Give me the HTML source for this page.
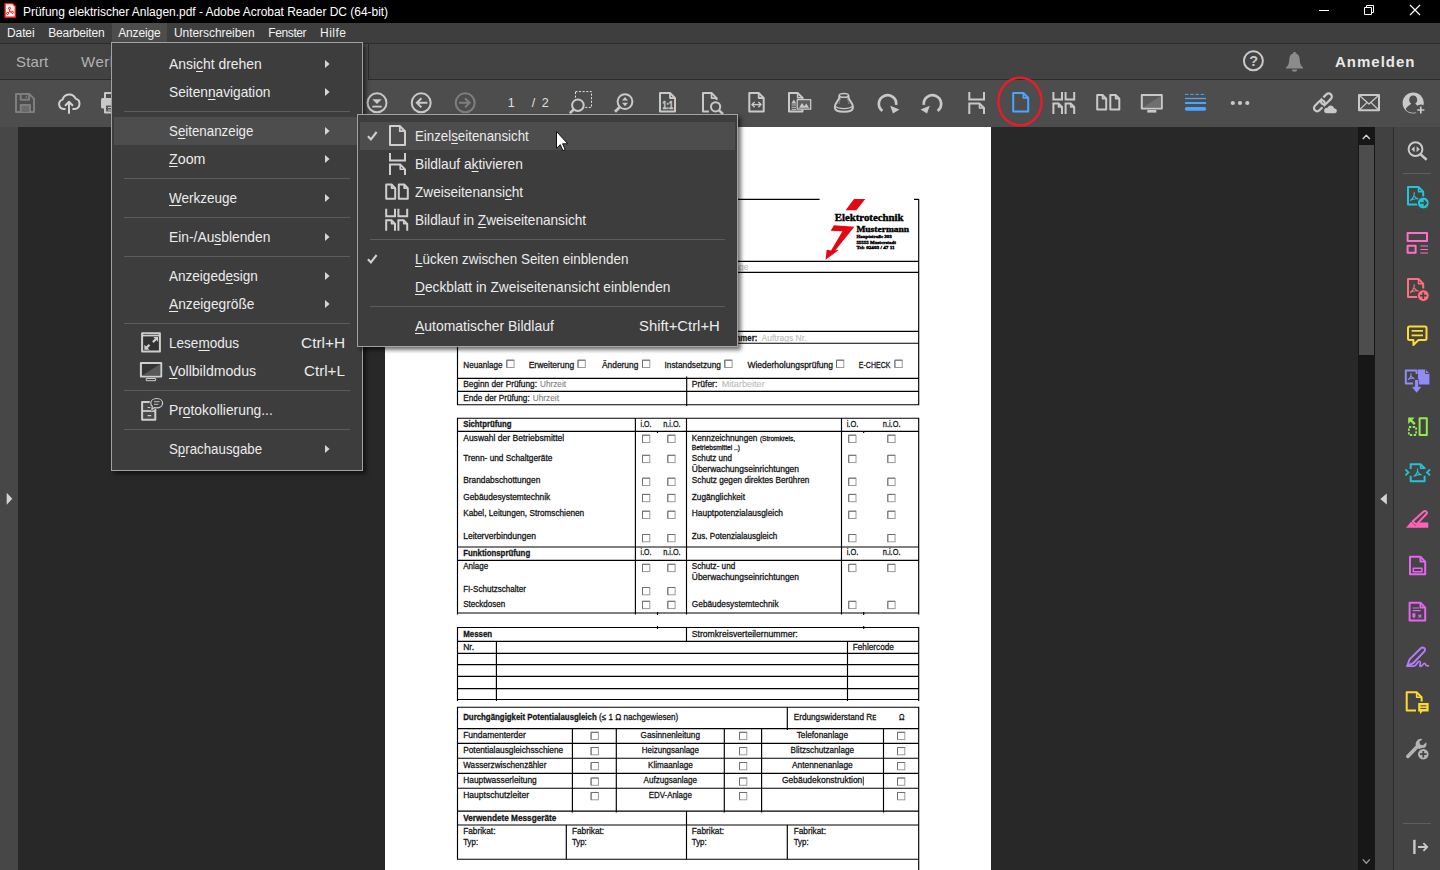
<!DOCTYPE html>
<html lang="de"><head><meta charset="utf-8"><title>Prüfung elektrischer Anlagen.pdf - Adobe Acrobat Reader DC (64-bit)</title>
<style>
html,body{margin:0;padding:0;}
body{width:1440px;height:870px;overflow:hidden;background:#282828;position:relative;font-family:"Liberation Sans",sans-serif;color:#e6e6e6;}
.abs{position:absolute;}
.t{position:absolute;white-space:pre;line-height:1;}
#titlebar{position:absolute;left:0;top:0;width:1440px;height:23px;background:#000;}
#menubar{position:absolute;left:0;top:23px;width:1440px;height:20px;background:#3e3e3e;}
#menubar .hl{position:absolute;left:112px;top:0;width:55px;height:20px;background:#4d4d4d;}
#tabbar{position:absolute;left:0;top:43px;width:1440px;height:36px;background:#434343;border-top:1px solid #2c2c2c;box-sizing:border-box;}
#tbline{position:absolute;left:0;top:79px;width:1440px;height:1px;background:#2c2c2c;}
#toolbar{position:absolute;left:0;top:80px;width:1440px;height:47px;background:#4d4d4d;}
#leftstrip{position:absolute;left:0;top:127px;width:18px;height:743px;background:#474747;}
#page{position:absolute;left:385px;top:127px;width:606px;height:743px;background:#fff;}
#vscroll{position:absolute;left:1358px;top:127px;width:17px;height:743px;background:#171717;}
#vthumb{position:absolute;left:1px;top:18px;width:15px;height:210px;background:#4d4d4d;}
#rstrip{position:absolute;left:1375px;top:127px;width:19px;height:743px;background:#414141;}
#rpane{position:absolute;left:1393px;top:127px;width:47px;height:743px;background:#444444;border-left:1px solid #2f2f2f;box-sizing:border-box;}
.menu{position:absolute;background:#3d3d3d;border:1px solid #a2a2a2;box-sizing:border-box;box-shadow:3px 3px 4px rgba(0,0,0,.55);}
.menu .row{position:absolute;height:28px;}
.menu .row.hl{background:#4d4d4d;}
.menu .sep{position:absolute;height:1px;background:#5c5c5c;}
.menu .lbl{position:absolute;white-space:pre;font-size:15px;line-height:28px;color:#ececec;top:0;display:inline-block;transform-origin:0 50%;}
.menu u{text-decoration:underline;text-underline-offset:1.5px;text-decoration-thickness:1px;}
svg{position:absolute;overflow:visible;}

</style></head>
<body>
<div id="titlebar">
<svg style="left:0;top:0" width="22" height="23" viewBox="0 0 22 23"><path d="M5 3.600H12.600L15.400 6.400V17.300H5Z" fill="#f6f6f6" stroke="#f41414" stroke-width="1.400"/><g stroke="#f41414" stroke-width="1" fill="none"><circle cx="9.500" cy="8.400" r="1"/><circle cx="7.500" cy="13.400" r="1"/><circle cx="12.400" cy="12.400" r="1"/><path d="M9.500 9.400L9.600 11.500L8.200 12.700M9.600 11.500L11.500 12.100"/></g></svg>
<span class="t" style="left:23px;top:6px;font-size:12px;color:#fff;letter-spacing:-0.027px">Prüfung elektrischer Anlagen.pdf - Adobe Acrobat Reader DC (64-bit)</span>
<svg style="left:1300px;top:-1px" width="140" height="23" viewBox="0 0 140 23"><path d="M19 11.5h10" stroke="#fff" stroke-width="1" fill="none"/><path d="M64.5 8.5h7v7h-7z M66.5 8.5v-2h7v7h-2" stroke="#fff" stroke-width="1" fill="none"/><path d="M110 6l10 10M120 6l-10 10" stroke="#fff" stroke-width="1.2" fill="none"/></svg>
</div>
<div id="menubar"><div class="hl"></div>
<span class="t" style="left:7px;top:4px;font-size:12px;color:#f2f2f2;letter-spacing:-0.104px">Datei</span>
<span class="t" style="left:48.3px;top:4px;font-size:12px;color:#f2f2f2;letter-spacing:-0.194px">Bearbeiten</span>
<span class="t" style="left:118.3px;top:4px;font-size:12px;color:#f2f2f2;letter-spacing:-0.179px">Anzeige</span>
<span class="t" style="left:174px;top:4px;font-size:12px;color:#f2f2f2;letter-spacing:-0.06px">Unterschreiben</span>
<span class="t" style="left:268.3px;top:4px;font-size:12px;color:#f2f2f2;letter-spacing:-0.398px">Fenster</span>
<span class="t" style="left:320px;top:4px;font-size:12px;color:#f2f2f2;letter-spacing:0.496px">Hilfe</span>
</div>
<div id="tabbar">
<span class="t" style="left:16px;top:10px;font-size:15px;color:#b2b2b2;letter-spacing:0.153px">Start</span>
<span class="t" style="left:81px;top:10px;font-size:15px;color:#b2b2b2;letter-spacing:0.538px">Werkzeuge</span>
<div class="abs" style="left:190px;top:0;width:179px;height:37px;background:#4d4d4d;border-right:1px solid #2c2c2c;border-left:1px solid #2c2c2c;box-sizing:border-box"></div>
<span class="t" style="left:1335px;top:10px;font-size:15px;font-weight:bold;color:#e9e9e9;letter-spacing:0.998px">Anmelden</span>
</div><div id="tbline" style="width:190px"></div><div id="tbline2" class="abs" style="left:368px;top:79px;width:1072px;height:1px;background:#2c2c2c"></div>
<div id="toolbar">
<span class="t" style="left:507.7px;top:17px;font-size:12.5px;color:#e0e0e0">1</span>
<span class="t" style="left:531.7px;top:17px;font-size:12.5px;color:#e0e0e0;word-spacing:3px">/ 2</span>
</div>
<div id="leftstrip"></div>
<div id="page"></div>
<svg id="docsvg" style="left:0;top:0" width="1440" height="870" viewBox="0 0 1440 870" font-family="Liberation Sans, sans-serif">
<path d="M457.5 199.4H819.6M914 199.4H918.7M457.5 261.3H918.7M457.5 272.4H918.7M457.5 331.4H918.7M457.5 343.2H918.7M457.5 378.3H918.7M457.5 391.3H918.7M457.5 404.7H918.7M457.5 198.9V405.2M918.7 198.9V405.2M686.7 376.5V406M457.5 418.2H918.7M457.5 431.4H918.7M457.5 547H918.7M457.5 560.3H918.7M457.5 613H918.7M457.5 417.7V614.5M635.4 417.7V614.5M686.5 417.7V614.5M841.5 417.7V614.5M918.7 417.7V614.5M657.5 431V433M657.5 612V615M863.7 431V433M863.7 612V615M457.5 627.5H918.7M457.5 641.4H918.7M457.5 653.3H918.7M457.5 664.6H918.7M457.5 676.4H918.7M457.5 688.6H918.7M457.5 699.5H918.7M457.5 627V701M918.7 627V701M686.5 627V641.4M496.4 641.4V701M847.5 641.4V701M657.5 626V629M863.7 626V629M457.5 707.2H918.7M457.5 728.6H918.7M457.5 743.4H918.7M457.5 758.2H918.7M457.5 773.3H918.7M457.5 788.2H918.7M457.5 811.1H918.7M457.5 825H918.7M457.5 859.2H918.7M457.5 706.7V859.7M918.7 706.7V870M787.3 707.2V730M572.4 728.6V812.5M616.3 728.6V812.5M724.3 728.6V812.5M761.6 728.6V812.5M883.5 728.6V812.5M686.5 811.1V859.2M566.3 825V859.2M787.3 825V859.2" stroke="#000" stroke-width="1.15" fill="none"/>
<text x="722" y="270" font-size="8.8" fill="#bdbdbd" stroke="#bdbdbd" stroke-width="0.12" textLength="26.6" lengthAdjust="spacingAndGlyphs">Anlage</text>
<text x="691.8" y="341" font-size="8.8" font-weight="bold" fill="#141414" stroke="#141414" stroke-width="0.28" textLength="65.5" lengthAdjust="spacingAndGlyphs">Auftragsnummer:</text>
<text x="761.6" y="341" font-size="8.8" fill="#bdbdbd" stroke="#bdbdbd" stroke-width="0.12" textLength="44.8" lengthAdjust="spacingAndGlyphs">Auftrags Nr.</text>
<text x="463.3" y="367.8" font-size="8.8" fill="#141414" stroke="#141414" stroke-width="0.28" textLength="39.2" lengthAdjust="spacingAndGlyphs">Neuanlage</text>
<text x="528.7" y="367.8" font-size="8.8" fill="#141414" stroke="#141414" stroke-width="0.28" textLength="45.5" lengthAdjust="spacingAndGlyphs">Erweiterung</text>
<text x="602" y="367.8" font-size="8.8" fill="#141414" stroke="#141414" stroke-width="0.28" textLength="36.3" lengthAdjust="spacingAndGlyphs">Änderung</text>
<text x="664.5" y="367.8" font-size="8.8" fill="#141414" stroke="#141414" stroke-width="0.28" textLength="56.5" lengthAdjust="spacingAndGlyphs">Instandsetzung</text>
<text x="747.4" y="367.8" font-size="8.8" fill="#141414" stroke="#141414" stroke-width="0.28" textLength="85.6" lengthAdjust="spacingAndGlyphs">Wiederholungsprüfung</text>
<text x="858.8" y="367.8" font-size="8.8" fill="#141414" stroke="#141414" stroke-width="0.28" textLength="31.6" lengthAdjust="spacingAndGlyphs">E-CHECK</text>
<rect x="506.8" y="360.2" width="7.300000000000001" height="7.300000000000001" fill="#fff" stroke="#9a9a9a" stroke-width="1"/><path d="M506.8 367.5V360.2H514.1" fill="none" stroke="#6e6e78" stroke-width="1"/>
<rect x="578.0" y="360.2" width="7.300000000000001" height="7.300000000000001" fill="#fff" stroke="#9a9a9a" stroke-width="1"/><path d="M578.0 367.5V360.2H585.3" fill="none" stroke="#6e6e78" stroke-width="1"/>
<rect x="642.5" y="360.2" width="7.300000000000001" height="7.300000000000001" fill="#fff" stroke="#9a9a9a" stroke-width="1"/><path d="M642.5 367.5V360.2H649.8" fill="none" stroke="#6e6e78" stroke-width="1"/>
<rect x="724.8" y="360.2" width="7.300000000000001" height="7.300000000000001" fill="#fff" stroke="#9a9a9a" stroke-width="1"/><path d="M724.8 367.5V360.2H732.0999999999999" fill="none" stroke="#6e6e78" stroke-width="1"/>
<rect x="836.5" y="360.2" width="7.300000000000001" height="7.300000000000001" fill="#fff" stroke="#9a9a9a" stroke-width="1"/><path d="M836.5 367.5V360.2H843.8" fill="none" stroke="#6e6e78" stroke-width="1"/>
<rect x="894.9" y="360.2" width="7.300000000000001" height="7.300000000000001" fill="#fff" stroke="#9a9a9a" stroke-width="1"/><path d="M894.9 367.5V360.2H902.1999999999999" fill="none" stroke="#6e6e78" stroke-width="1"/>
<text x="463.3" y="386.9" font-size="8.8" fill="#141414" stroke="#141414" stroke-width="0.28" textLength="73.7" lengthAdjust="spacingAndGlyphs">Beginn der Prüfung:</text>
<text x="540" y="386.9" font-size="8.8" fill="#7f7f7f" stroke="#7f7f7f" stroke-width="0.12" textLength="26" lengthAdjust="spacingAndGlyphs">Uhrzeit</text>
<text x="691.8" y="386.9" font-size="8.8" fill="#141414" stroke="#141414" stroke-width="0.28" textLength="25.5" lengthAdjust="spacingAndGlyphs">Prüfer:</text>
<text x="721.7" y="386.9" font-size="8.8" fill="#bdbdbd" stroke="#bdbdbd" stroke-width="0.12" textLength="43.0" lengthAdjust="spacingAndGlyphs">Mitarbeiter</text>
<text x="463.3" y="400.7" font-size="8.8" fill="#141414" stroke="#141414" stroke-width="0.28" textLength="66.4" lengthAdjust="spacingAndGlyphs">Ende der Prüfung:</text>
<text x="532.8" y="400.7" font-size="8.8" fill="#7f7f7f" stroke="#7f7f7f" stroke-width="0.12" textLength="26.2" lengthAdjust="spacingAndGlyphs">Uhrzeit</text>
<text x="463.2" y="427" font-size="8.8" font-weight="bold" fill="#141414" stroke="#141414" stroke-width="0.28" textLength="48.4" lengthAdjust="spacingAndGlyphs">Sichtprüfung</text>
<text x="640.6" y="427" font-size="8.8" fill="#141414" stroke="#141414" stroke-width="0.28" textLength="10.8" lengthAdjust="spacingAndGlyphs">i.O.</text>
<text x="663.2" y="427" font-size="8.8" fill="#141414" stroke="#141414" stroke-width="0.28" textLength="17.4" lengthAdjust="spacingAndGlyphs">n.i.O.</text>
<text x="846.7" y="427" font-size="8.8" fill="#141414" stroke="#141414" stroke-width="0.28" textLength="11.6" lengthAdjust="spacingAndGlyphs">i.O.</text>
<text x="882.8" y="427" font-size="8.8" fill="#141414" stroke="#141414" stroke-width="0.28" textLength="17.7" lengthAdjust="spacingAndGlyphs">n.i.O.</text>
<text x="640.6" y="554.8" font-size="8.8" fill="#141414" stroke="#141414" stroke-width="0.28" textLength="10.8" lengthAdjust="spacingAndGlyphs">i.O.</text>
<text x="663.2" y="554.8" font-size="8.8" fill="#141414" stroke="#141414" stroke-width="0.28" textLength="17.4" lengthAdjust="spacingAndGlyphs">n.i.O.</text>
<text x="846.7" y="554.8" font-size="8.8" fill="#141414" stroke="#141414" stroke-width="0.28" textLength="11.6" lengthAdjust="spacingAndGlyphs">i.O.</text>
<text x="882.8" y="554.8" font-size="8.8" fill="#141414" stroke="#141414" stroke-width="0.28" textLength="17.7" lengthAdjust="spacingAndGlyphs">n.i.O.</text>
<text x="463.2" y="440.9" font-size="8.8" fill="#141414" stroke="#141414" stroke-width="0.28" textLength="101.0" lengthAdjust="spacingAndGlyphs">Auswahl der Betriebsmittel</text>
<text x="463.2" y="460.9" font-size="8.8" fill="#141414" stroke="#141414" stroke-width="0.28" textLength="89.2" lengthAdjust="spacingAndGlyphs">Trenn- und Schaltgeräte</text>
<text x="463.2" y="482.9" font-size="8.8" fill="#141414" stroke="#141414" stroke-width="0.28" textLength="77.1" lengthAdjust="spacingAndGlyphs">Brandabschottungen</text>
<text x="463.2" y="500" font-size="8.8" fill="#141414" stroke="#141414" stroke-width="0.28" textLength="87.0" lengthAdjust="spacingAndGlyphs">Gebäudesystemtechnik</text>
<text x="463.2" y="516.4" font-size="8.8" fill="#141414" stroke="#141414" stroke-width="0.28" textLength="121.0" lengthAdjust="spacingAndGlyphs">Kabel, Leitungen, Stromschienen</text>
<text x="463.2" y="538.6" font-size="8.8" fill="#141414" stroke="#141414" stroke-width="0.28" textLength="72.8" lengthAdjust="spacingAndGlyphs">Leiterverbindungen</text>
<text x="463.2" y="569" font-size="8.8" fill="#141414" stroke="#141414" stroke-width="0.28" textLength="25.0" lengthAdjust="spacingAndGlyphs">Anlage</text>
<text x="463.2" y="591.6" font-size="8.8" fill="#141414" stroke="#141414" stroke-width="0.28" textLength="62.8" lengthAdjust="spacingAndGlyphs">FI-Schutzschalter</text>
<text x="463.2" y="606.7" font-size="8.8" fill="#141414" stroke="#141414" stroke-width="0.28" textLength="42.0" lengthAdjust="spacingAndGlyphs">Steckdosen</text>
<text x="463.2" y="556" font-size="8.8" font-weight="bold" fill="#141414" stroke="#141414" stroke-width="0.28" textLength="67.0" lengthAdjust="spacingAndGlyphs">Funktionsprüfung</text>
<text x="691.8" y="440.9" font-size="8.8" fill="#141414" stroke="#141414" stroke-width="0.28" textLength="65.5" lengthAdjust="spacingAndGlyphs">Kennzeichnungen</text>
<text x="759.9" y="440.9" font-size="6.6" fill="#141414" stroke="#141414" stroke-width="0.28" textLength="35.1" lengthAdjust="spacingAndGlyphs">(Stromkreis,</text>
<text x="691.8" y="449.6" font-size="6.6" fill="#141414" stroke="#141414" stroke-width="0.28" textLength="48.2" lengthAdjust="spacingAndGlyphs">Betriebsmittel ..)</text>
<text x="691.8" y="460.9" font-size="8.8" fill="#141414" stroke="#141414" stroke-width="0.28" textLength="40.2" lengthAdjust="spacingAndGlyphs">Schutz und</text>
<text x="691.8" y="471.6" font-size="8.8" fill="#141414" stroke="#141414" stroke-width="0.28" textLength="107.2" lengthAdjust="spacingAndGlyphs">Überwachungseinrichtungen</text>
<text x="691.8" y="482.9" font-size="8.8" fill="#141414" stroke="#141414" stroke-width="0.28" textLength="117.5" lengthAdjust="spacingAndGlyphs">Schutz gegen direktes Berühren</text>
<text x="691.8" y="500" font-size="8.8" fill="#141414" stroke="#141414" stroke-width="0.28" textLength="53.2" lengthAdjust="spacingAndGlyphs">Zugänglichkeit</text>
<text x="691.8" y="516.4" font-size="8.8" fill="#141414" stroke="#141414" stroke-width="0.28" textLength="91.2" lengthAdjust="spacingAndGlyphs">Hauptpotenzialausgleich</text>
<text x="691.8" y="538.6" font-size="8.8" fill="#141414" stroke="#141414" stroke-width="0.28" textLength="85.4" lengthAdjust="spacingAndGlyphs">Zus. Potenzialausgleich</text>
<text x="691.8" y="569" font-size="8.8" fill="#141414" stroke="#141414" stroke-width="0.28" textLength="43.4" lengthAdjust="spacingAndGlyphs">Schutz- und</text>
<text x="691.8" y="580.3" font-size="8.8" fill="#141414" stroke="#141414" stroke-width="0.28" textLength="107.2" lengthAdjust="spacingAndGlyphs">Überwachungseinrichtungen</text>
<text x="691.8" y="606.7" font-size="8.8" fill="#141414" stroke="#141414" stroke-width="0.28" textLength="86.8" lengthAdjust="spacingAndGlyphs">Gebäudesystemtechnik</text>
<rect x="642.5" y="435.2" width="7.300000000000001" height="7.300000000000001" fill="#fff" stroke="#9a9a9a" stroke-width="1"/><path d="M642.5 442.5V435.2H649.8" fill="none" stroke="#6e6e78" stroke-width="1"/>
<rect x="667.8" y="435.2" width="7.300000000000001" height="7.300000000000001" fill="#fff" stroke="#9a9a9a" stroke-width="1"/><path d="M667.8 442.5V435.2H675.0999999999999" fill="none" stroke="#6e6e78" stroke-width="1"/>
<rect x="848.7" y="435.2" width="7.300000000000001" height="7.300000000000001" fill="#fff" stroke="#9a9a9a" stroke-width="1"/><path d="M848.7 442.5V435.2H856.0" fill="none" stroke="#6e6e78" stroke-width="1"/>
<rect x="887.8" y="435.2" width="7.300000000000001" height="7.300000000000001" fill="#fff" stroke="#9a9a9a" stroke-width="1"/><path d="M887.8 442.5V435.2H895.0999999999999" fill="none" stroke="#6e6e78" stroke-width="1"/>
<rect x="642.5" y="455.3" width="7.300000000000001" height="7.300000000000001" fill="#fff" stroke="#9a9a9a" stroke-width="1"/><path d="M642.5 462.6V455.3H649.8" fill="none" stroke="#6e6e78" stroke-width="1"/>
<rect x="667.8" y="455.3" width="7.300000000000001" height="7.300000000000001" fill="#fff" stroke="#9a9a9a" stroke-width="1"/><path d="M667.8 462.6V455.3H675.0999999999999" fill="none" stroke="#6e6e78" stroke-width="1"/>
<rect x="848.7" y="455.3" width="7.300000000000001" height="7.300000000000001" fill="#fff" stroke="#9a9a9a" stroke-width="1"/><path d="M848.7 462.6V455.3H856.0" fill="none" stroke="#6e6e78" stroke-width="1"/>
<rect x="887.8" y="455.3" width="7.300000000000001" height="7.300000000000001" fill="#fff" stroke="#9a9a9a" stroke-width="1"/><path d="M887.8 462.6V455.3H895.0999999999999" fill="none" stroke="#6e6e78" stroke-width="1"/>
<rect x="642.5" y="478.2" width="7.300000000000001" height="7.300000000000001" fill="#fff" stroke="#9a9a9a" stroke-width="1"/><path d="M642.5 485.5V478.2H649.8" fill="none" stroke="#6e6e78" stroke-width="1"/>
<rect x="667.8" y="478.2" width="7.300000000000001" height="7.300000000000001" fill="#fff" stroke="#9a9a9a" stroke-width="1"/><path d="M667.8 485.5V478.2H675.0999999999999" fill="none" stroke="#6e6e78" stroke-width="1"/>
<rect x="848.7" y="478.2" width="7.300000000000001" height="7.300000000000001" fill="#fff" stroke="#9a9a9a" stroke-width="1"/><path d="M848.7 485.5V478.2H856.0" fill="none" stroke="#6e6e78" stroke-width="1"/>
<rect x="887.8" y="478.2" width="7.300000000000001" height="7.300000000000001" fill="#fff" stroke="#9a9a9a" stroke-width="1"/><path d="M887.8 485.5V478.2H895.0999999999999" fill="none" stroke="#6e6e78" stroke-width="1"/>
<rect x="642.5" y="494.4" width="7.300000000000001" height="7.300000000000001" fill="#fff" stroke="#9a9a9a" stroke-width="1"/><path d="M642.5 501.7V494.4H649.8" fill="none" stroke="#6e6e78" stroke-width="1"/>
<rect x="667.8" y="494.4" width="7.300000000000001" height="7.300000000000001" fill="#fff" stroke="#9a9a9a" stroke-width="1"/><path d="M667.8 501.7V494.4H675.0999999999999" fill="none" stroke="#6e6e78" stroke-width="1"/>
<rect x="848.7" y="494.4" width="7.300000000000001" height="7.300000000000001" fill="#fff" stroke="#9a9a9a" stroke-width="1"/><path d="M848.7 501.7V494.4H856.0" fill="none" stroke="#6e6e78" stroke-width="1"/>
<rect x="887.8" y="494.4" width="7.300000000000001" height="7.300000000000001" fill="#fff" stroke="#9a9a9a" stroke-width="1"/><path d="M887.8 501.7V494.4H895.0999999999999" fill="none" stroke="#6e6e78" stroke-width="1"/>
<rect x="642.5" y="511.2" width="7.300000000000001" height="7.300000000000001" fill="#fff" stroke="#9a9a9a" stroke-width="1"/><path d="M642.5 518.5V511.2H649.8" fill="none" stroke="#6e6e78" stroke-width="1"/>
<rect x="667.8" y="511.2" width="7.300000000000001" height="7.300000000000001" fill="#fff" stroke="#9a9a9a" stroke-width="1"/><path d="M667.8 518.5V511.2H675.0999999999999" fill="none" stroke="#6e6e78" stroke-width="1"/>
<rect x="848.7" y="511.2" width="7.300000000000001" height="7.300000000000001" fill="#fff" stroke="#9a9a9a" stroke-width="1"/><path d="M848.7 518.5V511.2H856.0" fill="none" stroke="#6e6e78" stroke-width="1"/>
<rect x="887.8" y="511.2" width="7.300000000000001" height="7.300000000000001" fill="#fff" stroke="#9a9a9a" stroke-width="1"/><path d="M887.8 518.5V511.2H895.0999999999999" fill="none" stroke="#6e6e78" stroke-width="1"/>
<rect x="642.5" y="534.5" width="7.300000000000001" height="7.300000000000001" fill="#fff" stroke="#9a9a9a" stroke-width="1"/><path d="M642.5 541.8V534.5H649.8" fill="none" stroke="#6e6e78" stroke-width="1"/>
<rect x="667.8" y="534.5" width="7.300000000000001" height="7.300000000000001" fill="#fff" stroke="#9a9a9a" stroke-width="1"/><path d="M667.8 541.8V534.5H675.0999999999999" fill="none" stroke="#6e6e78" stroke-width="1"/>
<rect x="848.7" y="534.5" width="7.300000000000001" height="7.300000000000001" fill="#fff" stroke="#9a9a9a" stroke-width="1"/><path d="M848.7 541.8V534.5H856.0" fill="none" stroke="#6e6e78" stroke-width="1"/>
<rect x="887.8" y="534.5" width="7.300000000000001" height="7.300000000000001" fill="#fff" stroke="#9a9a9a" stroke-width="1"/><path d="M887.8 541.8V534.5H895.0999999999999" fill="none" stroke="#6e6e78" stroke-width="1"/>
<rect x="642.5" y="564.3" width="7.300000000000001" height="7.300000000000001" fill="#fff" stroke="#9a9a9a" stroke-width="1"/><path d="M642.5 571.5999999999999V564.3H649.8" fill="none" stroke="#6e6e78" stroke-width="1"/>
<rect x="667.8" y="564.3" width="7.300000000000001" height="7.300000000000001" fill="#fff" stroke="#9a9a9a" stroke-width="1"/><path d="M667.8 571.5999999999999V564.3H675.0999999999999" fill="none" stroke="#6e6e78" stroke-width="1"/>
<rect x="848.7" y="564.3" width="7.300000000000001" height="7.300000000000001" fill="#fff" stroke="#9a9a9a" stroke-width="1"/><path d="M848.7 571.5999999999999V564.3H856.0" fill="none" stroke="#6e6e78" stroke-width="1"/>
<rect x="887.8" y="564.3" width="7.300000000000001" height="7.300000000000001" fill="#fff" stroke="#9a9a9a" stroke-width="1"/><path d="M887.8 571.5999999999999V564.3H895.0999999999999" fill="none" stroke="#6e6e78" stroke-width="1"/>
<rect x="642.5" y="587.5" width="7.300000000000001" height="7.300000000000001" fill="#fff" stroke="#9a9a9a" stroke-width="1"/><path d="M642.5 594.8V587.5H649.8" fill="none" stroke="#6e6e78" stroke-width="1"/>
<rect x="667.8" y="587.5" width="7.300000000000001" height="7.300000000000001" fill="#fff" stroke="#9a9a9a" stroke-width="1"/><path d="M667.8 594.8V587.5H675.0999999999999" fill="none" stroke="#6e6e78" stroke-width="1"/>
<rect x="642.5" y="601.3" width="7.300000000000001" height="7.300000000000001" fill="#fff" stroke="#9a9a9a" stroke-width="1"/><path d="M642.5 608.5999999999999V601.3H649.8" fill="none" stroke="#6e6e78" stroke-width="1"/>
<rect x="667.8" y="601.3" width="7.300000000000001" height="7.300000000000001" fill="#fff" stroke="#9a9a9a" stroke-width="1"/><path d="M667.8 608.5999999999999V601.3H675.0999999999999" fill="none" stroke="#6e6e78" stroke-width="1"/>
<rect x="848.7" y="601.3" width="7.300000000000001" height="7.300000000000001" fill="#fff" stroke="#9a9a9a" stroke-width="1"/><path d="M848.7 608.5999999999999V601.3H856.0" fill="none" stroke="#6e6e78" stroke-width="1"/>
<rect x="887.8" y="601.3" width="7.300000000000001" height="7.300000000000001" fill="#fff" stroke="#9a9a9a" stroke-width="1"/><path d="M887.8 608.5999999999999V601.3H895.0999999999999" fill="none" stroke="#6e6e78" stroke-width="1"/>
<text x="463.2" y="637" font-size="8.8" font-weight="bold" fill="#141414" stroke="#141414" stroke-width="0.28" textLength="29.0" lengthAdjust="spacingAndGlyphs">Messen</text>
<text x="691.8" y="637" font-size="8.8" fill="#141414" stroke="#141414" stroke-width="0.28" textLength="105.9" lengthAdjust="spacingAndGlyphs">Stromkreisverteilernummer:</text>
<text x="463.2" y="649.9" font-size="8.8" fill="#141414" stroke="#141414" stroke-width="0.28" textLength="10.8" lengthAdjust="spacingAndGlyphs">Nr.</text>
<text x="852.7" y="649.9" font-size="8.8" fill="#141414" stroke="#141414" stroke-width="0.28" textLength="41.2" lengthAdjust="spacingAndGlyphs">Fehlercode</text>
<text x="463.2" y="720.2" font-size="8.8" font-weight="bold" fill="#141414" stroke="#141414" stroke-width="0.28" textLength="133.5" lengthAdjust="spacingAndGlyphs">Durchgängigkeit Potentialausgleich</text>
<text x="599" y="720.2" font-size="8.8" fill="#141414" stroke="#141414" stroke-width="0.28" textLength="79.3" lengthAdjust="spacingAndGlyphs">(≤ 1 Ω nachgewiesen)</text>
<text x="793.7" y="720.2" font-size="8.8" fill="#141414" stroke="#141414" stroke-width="0.28" textLength="82.5" lengthAdjust="spacingAndGlyphs">Erdungswiderstand Rᴇ</text>
<text x="899" y="720.2" font-size="8.8" fill="#141414" stroke="#141414" stroke-width="0.28" textLength="5.5" lengthAdjust="spacingAndGlyphs">Ω</text>
<text x="463.2" y="737.9" font-size="8.8" fill="#141414" stroke="#141414" stroke-width="0.28" textLength="62.7" lengthAdjust="spacingAndGlyphs">Fundamenterder</text>
<text x="463.2" y="753" font-size="8.8" fill="#141414" stroke="#141414" stroke-width="0.28" textLength="100.0" lengthAdjust="spacingAndGlyphs">Potentialausgleichsschiene</text>
<text x="463.2" y="768" font-size="8.8" fill="#141414" stroke="#141414" stroke-width="0.28" textLength="83.2" lengthAdjust="spacingAndGlyphs">Wasserzwischenzähler</text>
<text x="463.2" y="782.8" font-size="8.8" fill="#141414" stroke="#141414" stroke-width="0.28" textLength="73.6" lengthAdjust="spacingAndGlyphs">Hauptwasserleitung</text>
<text x="463.2" y="797.8" font-size="8.8" fill="#141414" stroke="#141414" stroke-width="0.28" textLength="65.8" lengthAdjust="spacingAndGlyphs">Hauptschutzleiter</text>
<text x="640.6" y="737.9" font-size="8.8" fill="#141414" stroke="#141414" stroke-width="0.28" textLength="59.4" lengthAdjust="spacingAndGlyphs">Gasinnenleitung</text>
<text x="641.8" y="753" font-size="8.8" fill="#141414" stroke="#141414" stroke-width="0.28" textLength="57.2" lengthAdjust="spacingAndGlyphs">Heizungsanlage</text>
<text x="648" y="768" font-size="8.8" fill="#141414" stroke="#141414" stroke-width="0.28" textLength="44.7" lengthAdjust="spacingAndGlyphs">Klimaanlage</text>
<text x="643.6" y="782.8" font-size="8.8" fill="#141414" stroke="#141414" stroke-width="0.28" textLength="53.4" lengthAdjust="spacingAndGlyphs">Aufzugsanlage</text>
<text x="648.8" y="797.8" font-size="8.8" fill="#141414" stroke="#141414" stroke-width="0.28" textLength="43.0" lengthAdjust="spacingAndGlyphs">EDV-Anlage</text>
<text x="796.7" y="737.9" font-size="8.8" fill="#141414" stroke="#141414" stroke-width="0.28" textLength="51.3" lengthAdjust="spacingAndGlyphs">Telefonanlage</text>
<text x="790.6" y="753" font-size="8.8" fill="#141414" stroke="#141414" stroke-width="0.28" textLength="63.4" lengthAdjust="spacingAndGlyphs">Blitzschutzanlage</text>
<text x="792" y="768" font-size="8.8" fill="#141414" stroke="#141414" stroke-width="0.28" textLength="60.7" lengthAdjust="spacingAndGlyphs">Antennenanlage</text>
<text x="782" y="782.8" font-size="8.8" fill="#141414" stroke="#141414" stroke-width="0.28" textLength="80.3" lengthAdjust="spacingAndGlyphs">Gebäudekonstruktion</text>
<path d="M863.3 776.5V785.5" stroke="#000" stroke-width="0.8"/>
<rect x="591.1" y="732.3" width="7.300000000000001" height="7.300000000000001" fill="#fff" stroke="#9a9a9a" stroke-width="1"/><path d="M591.1 739.5999999999999V732.3H598.4" fill="none" stroke="#6e6e78" stroke-width="1"/>
<rect x="739.5" y="732.3" width="7.300000000000001" height="7.300000000000001" fill="#fff" stroke="#9a9a9a" stroke-width="1"/><path d="M739.5 739.5999999999999V732.3H746.8" fill="none" stroke="#6e6e78" stroke-width="1"/>
<rect x="897.5" y="732.3" width="7.300000000000001" height="7.300000000000001" fill="#fff" stroke="#9a9a9a" stroke-width="1"/><path d="M897.5 739.5999999999999V732.3H904.8" fill="none" stroke="#6e6e78" stroke-width="1"/>
<rect x="591.1" y="747.5" width="7.300000000000001" height="7.300000000000001" fill="#fff" stroke="#9a9a9a" stroke-width="1"/><path d="M591.1 754.8V747.5H598.4" fill="none" stroke="#6e6e78" stroke-width="1"/>
<rect x="739.5" y="747.5" width="7.300000000000001" height="7.300000000000001" fill="#fff" stroke="#9a9a9a" stroke-width="1"/><path d="M739.5 754.8V747.5H746.8" fill="none" stroke="#6e6e78" stroke-width="1"/>
<rect x="897.5" y="747.5" width="7.300000000000001" height="7.300000000000001" fill="#fff" stroke="#9a9a9a" stroke-width="1"/><path d="M897.5 754.8V747.5H904.8" fill="none" stroke="#6e6e78" stroke-width="1"/>
<rect x="591.1" y="762.5" width="7.300000000000001" height="7.300000000000001" fill="#fff" stroke="#9a9a9a" stroke-width="1"/><path d="M591.1 769.8V762.5H598.4" fill="none" stroke="#6e6e78" stroke-width="1"/>
<rect x="739.5" y="762.5" width="7.300000000000001" height="7.300000000000001" fill="#fff" stroke="#9a9a9a" stroke-width="1"/><path d="M739.5 769.8V762.5H746.8" fill="none" stroke="#6e6e78" stroke-width="1"/>
<rect x="897.5" y="762.5" width="7.300000000000001" height="7.300000000000001" fill="#fff" stroke="#9a9a9a" stroke-width="1"/><path d="M897.5 769.8V762.5H904.8" fill="none" stroke="#6e6e78" stroke-width="1"/>
<rect x="591.1" y="778.0" width="7.300000000000001" height="7.300000000000001" fill="#fff" stroke="#9a9a9a" stroke-width="1"/><path d="M591.1 785.3V778.0H598.4" fill="none" stroke="#6e6e78" stroke-width="1"/>
<rect x="739.5" y="778.0" width="7.300000000000001" height="7.300000000000001" fill="#fff" stroke="#9a9a9a" stroke-width="1"/><path d="M739.5 785.3V778.0H746.8" fill="none" stroke="#6e6e78" stroke-width="1"/>
<rect x="897.5" y="778.0" width="7.300000000000001" height="7.300000000000001" fill="#fff" stroke="#9a9a9a" stroke-width="1"/><path d="M897.5 785.3V778.0H904.8" fill="none" stroke="#6e6e78" stroke-width="1"/>
<rect x="591.1" y="792.5" width="7.300000000000001" height="7.300000000000001" fill="#fff" stroke="#9a9a9a" stroke-width="1"/><path d="M591.1 799.8V792.5H598.4" fill="none" stroke="#6e6e78" stroke-width="1"/>
<rect x="739.5" y="792.5" width="7.300000000000001" height="7.300000000000001" fill="#fff" stroke="#9a9a9a" stroke-width="1"/><path d="M739.5 799.8V792.5H746.8" fill="none" stroke="#6e6e78" stroke-width="1"/>
<rect x="897.5" y="792.5" width="7.300000000000001" height="7.300000000000001" fill="#fff" stroke="#9a9a9a" stroke-width="1"/><path d="M897.5 799.8V792.5H904.8" fill="none" stroke="#6e6e78" stroke-width="1"/>
<text x="463.2" y="821" font-size="8.8" font-weight="bold" fill="#141414" stroke="#141414" stroke-width="0.28" textLength="93.1" lengthAdjust="spacingAndGlyphs">Verwendete Messgeräte</text>
<text x="463.2" y="833.7" font-size="8.8" fill="#141414" stroke="#141414" stroke-width="0.28" textLength="32.3" lengthAdjust="spacingAndGlyphs">Fabrikat:</text>
<text x="463.2" y="844.7" font-size="8.8" fill="#141414" stroke="#141414" stroke-width="0.28" textLength="14.9" lengthAdjust="spacingAndGlyphs">Typ:</text>
<text x="571.9" y="833.7" font-size="8.8" fill="#141414" stroke="#141414" stroke-width="0.28" textLength="32.3" lengthAdjust="spacingAndGlyphs">Fabrikat:</text>
<text x="571.9" y="844.7" font-size="8.8" fill="#141414" stroke="#141414" stroke-width="0.28" textLength="14.9" lengthAdjust="spacingAndGlyphs">Typ:</text>
<text x="691.8" y="833.7" font-size="8.8" fill="#141414" stroke="#141414" stroke-width="0.28" textLength="32.3" lengthAdjust="spacingAndGlyphs">Fabrikat:</text>
<text x="691.8" y="844.7" font-size="8.8" fill="#141414" stroke="#141414" stroke-width="0.28" textLength="14.9" lengthAdjust="spacingAndGlyphs">Typ:</text>
<text x="793.7" y="833.7" font-size="8.8" fill="#141414" stroke="#141414" stroke-width="0.28" textLength="32.3" lengthAdjust="spacingAndGlyphs">Fabrikat:</text>
<text x="793.7" y="844.7" font-size="8.8" fill="#141414" stroke="#141414" stroke-width="0.28" textLength="14.9" lengthAdjust="spacingAndGlyphs">Typ:</text>
<g id="logo"><path d="M854 199L865.3 199L856.4 210.3L845.6 210.3Z" fill="#e30613"/><path d="M833.9 225.2L854.4 226.8L835.4 250.3L838.7 250.1L825.5 259.8L826.7 249.7L831.1 250.5L842.4 231.2L830.7 230.8Z" fill="#e30613"/>
<text x="834.7" y="220.7" font-size="9.6" textLength="68.8" lengthAdjust="spacingAndGlyphs" font-family="Liberation Serif, serif" font-weight="bold" fill="#000" stroke="#000" stroke-width="0.35">Elektrotechnik</text>
<text x="856.4" y="232.2" font-size="8" textLength="52.7" lengthAdjust="spacingAndGlyphs" font-family="Liberation Serif, serif" font-weight="bold" fill="#000" stroke="#000" stroke-width="0.35">Mustermann</text>
<text x="856.4" y="238.4" font-size="4.2" textLength="35.4" lengthAdjust="spacingAndGlyphs" font-family="Liberation Serif, serif" font-weight="bold" fill="#000" stroke="#000" stroke-width="0.35">Hauptstraße 303</text>
<text x="856.4" y="243.7" font-size="4.2" textLength="39.5" lengthAdjust="spacingAndGlyphs" font-family="Liberation Serif, serif" font-weight="bold" fill="#000" stroke="#000" stroke-width="0.35">55555 Musterstadt</text>
<text x="856.4" y="248.7" font-size="4.2" textLength="38.2" lengthAdjust="spacingAndGlyphs" font-family="Liberation Serif, serif" font-weight="bold" fill="#000" stroke="#000" stroke-width="0.35">Tel: 02403 / 47 11</text>
</g></svg>
<div id="vscroll"><div id="vthumb"></div></div><div id="rstrip"></div><div id="rpane"></div>
<svg id="icons" style="left:0;top:0" width="1440" height="870" viewBox="0 0 1440 870" fill="none" stroke-linejoin="round" font-family="Liberation Sans, sans-serif">
<g stroke="#7e7e7e" stroke-width="2"><path d="M16 94H29.3L34 98.7V112H16Z"/><path d="M20.7 94V99.8H29V94" /><path d="M26.3 95.7V98" stroke-width="1.2"/><path d="M20.7 112V105H30V112" fill="#6b6b6b"/></g>
<g stroke="#d2d2d2" stroke-width="2" stroke-linecap="round"><path d="M64.8 109H63.6A4.8 4.8 0 0 1 62.6 99.6A6.9 6.9 0 0 1 75.6 98.6A5.3 5.3 0 0 1 74.6 109H73.2"/><path d="M69 113V102.2M65.6 105.2L69 101.8L72.4 105.2"/></g>
<g><path d="M105 98V93H121V98" stroke="#c9c9c9" stroke-width="2"/><rect x="101" y="98" width="24" height="10.5" rx="1.5" fill="#c9c9c9"/><rect x="105" y="104.5" width="16" height="8" fill="#5a5a5a" stroke="#c9c9c9" stroke-width="2"/><path d="M108 107.5H118M108 110H118" stroke="#c9c9c9" stroke-width="1"/></g>
<g stroke="#c9c9c9" stroke-width="2"><circle cx="377" cy="102.8" r="9.5"/><path d="M372.3 99.2H381.7L377 104Z" fill="#c9c9c9" stroke="none"/><path d="M372.3 106.6H381.7" stroke-width="1.8"/></g>
<g stroke="#c9c9c9" stroke-width="2"><circle cx="421.2" cy="102.8" r="9.5"/><path d="M416.8 102.8H427.4M421.4 98.2L416.8 102.8L421.4 107.4" stroke-linejoin="miter"/></g>
<g stroke="#7e7e7e" stroke-width="2"><circle cx="465.2" cy="102.8" r="9.5"/><path d="M469.6 102.8H459M465 98.2L469.6 102.8L465 107.4" stroke-linejoin="miter"/></g>
<g><rect x="575.5" y="91.6" width="16" height="15.8" stroke="#e4e4e4" stroke-width="1" stroke-dasharray="2 1.6"/><circle cx="577.9" cy="105.2" r="5.8" stroke="#c9c9c9" stroke-width="2" fill="#4d4d4d"/><path d="M573.6 109.6L569.8 113.2" stroke="#c9c9c9" stroke-width="2.6"/></g>
<g><circle cx="625" cy="101.6" r="7.4" stroke="#c9c9c9" stroke-width="2"/><path d="M619.6 107.2L615 111.8" stroke="#c9c9c9" stroke-width="2.8"/><path d="M622 100.4H628L625 97ZM622 102.8H628L625 106.2Z" fill="#c9c9c9"/></g>
<path d="M660.0 93.0H670.0L675.0 98.0V111.5H660.0Z" stroke="#c9c9c9" stroke-width="2" fill="none"/><path d="M670.0 93.0V98.0H675.0" stroke="#c9c9c9" stroke-width="1.8"/>
<text x="662.400" y="109.300" font-size="10.500" font-weight="bold" fill="#c9c9c9" stroke="#c9c9c9" stroke-width="0.500" textLength="10.600" lengthAdjust="spacingAndGlyphs">1:1</text>
<path d="M709 111.5H703V93H711.5L716.6 98.1V100" stroke="#c9c9c9" stroke-width="2"/><path d="M711.5 93V98.1H716.6" stroke="#c9c9c9" stroke-width="1.6"/><circle cx="715.6" cy="106.8" r="4.6" stroke="#c9c9c9" stroke-width="2"/><path d="M719 110.4L723 114" stroke="#c9c9c9" stroke-width="2.4"/>
<path d="M749.3 93.0H758.6999999999999L763.6999999999999 98.0V111.5H749.3Z" stroke="#c9c9c9" stroke-width="2" fill="none"/><path d="M758.6999999999999 93.0V98.0H763.6999999999999" stroke="#c9c9c9" stroke-width="1.8"/>
<path d="M752.6 104.6H760.4" stroke="#c9c9c9" stroke-width="1.4"/><path d="M754.6 102L752 104.6L754.6 107.2M758.4 102L761 104.6L758.4 107.2" stroke="#c9c9c9" stroke-width="1.4" fill="none" stroke-linejoin="miter"/>
<path d="M802.5 100V97.7L797.6 93H789V111.5H802.5V109.5" stroke="#c9c9c9" stroke-width="2"/><path d="M797.6 93V97.7H802.5" stroke="#c9c9c9" stroke-width="1.5"/><path d="M791.5 105H796M791.5 107.3H796M791.5 109.4H796" stroke="#c9c9c9" stroke-width="1"/><path d="M791.3 103.5L793.8 99.5L796.3 103.5Z" fill="#c9c9c9"/><rect x="797.2" y="99.7" width="13.5" height="9.5" fill="#5e5e5e" stroke="#c9c9c9" stroke-width="1.3"/><path d="M799 107.8L802 103L804.3 106.2L806.3 103.6L809 107.8Z" fill="#c9c9c9"/>
<g stroke="#c9c9c9"><ellipse cx="843.9" cy="95.4" rx="4.6" ry="1.8" stroke-width="1.5"/><path d="M839.3 95.4V97.6C839.3 100 834.8 102.6 834.8 107.2C834.8 110.2 838.7 111.7 843.9 111.7C849.1 111.7 853 110.2 853 107.2C853 102.6 848.500 100 848.500 97.6V95.4" stroke-width="2"/><path d="M835.600 106.4C838 109.300 849.800 109.300 852.200 106.400" stroke-width="1.200"/><path d="M840.500 98.500L838.800 104M847.300 98.500L849 104" stroke-width="0.700" stroke-dasharray="1.200 1"/></g>
<g transform="translate(887.6 0) scale(1 1)"><path d="M-5.2 110.9A8.700 8.700 0 1 1 8.600 104.800" stroke="#c9c9c9" stroke-width="2.700" fill="none"/><path d="M2.600 105.800L11.800 109.400L5.400 113.600Z" fill="#c9c9c9"/></g>
<g transform="translate(932.4 0) scale(-1 1)"><path d="M-5.2 110.9A8.700 8.700 0 1 1 8.600 104.800" stroke="#c9c9c9" stroke-width="2.700" fill="none"/><path d="M2.600 105.800L11.800 109.400L5.400 113.600Z" fill="#c9c9c9"/></g>
<path d="M969.3 92V99.5H984.0V92" stroke="#c9c9c9" stroke-width="2" stroke-linejoin="miter"/><path d="M969.3 114V103.5H979.5L984.0 108.0V114" stroke="#c9c9c9" stroke-width="2" stroke-linejoin="miter"/><path d="M979.5 103.5V108.0H984.0" stroke="#c9c9c9" stroke-width="1.6"/>
<path d="M1013.2 93.0H1023.4000000000001L1028.2 97.8V111.5H1013.2Z" stroke="#4aa5ff" stroke-width="2" fill="none"/><path d="M1023.4000000000001 93.0V97.8H1028.2" stroke="#4aa5ff" stroke-width="1.8"/>
<ellipse cx="1020" cy="101.5" rx="21.6" ry="23.9" stroke="#ec1c26" stroke-width="2.4"/>
<path d="M1053.4 92V99.5H1062.0V92" stroke="#c9c9c9" stroke-width="2" stroke-linejoin="miter"/><path d="M1053.4 114V103.5H1058.5L1062.0 107.0V114" stroke="#c9c9c9" stroke-width="2" stroke-linejoin="miter"/><path d="M1058.5 103.5V107.0H1062.0" stroke="#c9c9c9" stroke-width="1.6"/>
<path d="M1065.6 92V99.5H1074.1999999999998V92" stroke="#c9c9c9" stroke-width="2" stroke-linejoin="miter"/><path d="M1065.6 114V103.5H1070.6999999999998L1074.1999999999998 107.0V114" stroke="#c9c9c9" stroke-width="2" stroke-linejoin="miter"/><path d="M1070.6999999999998 103.5V107.0H1074.1999999999998" stroke="#c9c9c9" stroke-width="1.6"/>
<path d="M1097.2 95.0H1102.6000000000001L1106.2 98.6V109.5H1097.2Z" stroke="#c9c9c9" stroke-width="2" fill="none"/><path d="M1102.6000000000001 95.0V98.6H1106.2" stroke="#c9c9c9" stroke-width="1.8"/>
<path d="M1110.3 95.0H1115.7L1119.3 98.6V109.5H1110.3Z" stroke="#c9c9c9" stroke-width="2" fill="none"/><path d="M1115.7 95.0V98.6H1119.3" stroke="#c9c9c9" stroke-width="1.8"/>
<rect x="1141.8" y="95" width="20" height="13.5" fill="#5a5a5a" stroke="#c9c9c9" stroke-width="2"/><path d="M1160.8 96V107.5H1142.8Z" fill="#6f6f6f"/><rect x="1147.3" y="110" width="9" height="2.6" fill="#c9c9c9"/>
<path d="M1185 94.4H1206" stroke="#4aa5ff" stroke-width="1" stroke-dasharray="3.4 1.8"/><path d="M1185 98.5H1206" stroke="#4aa5ff" stroke-width="1.3"/><path d="M1185 103H1206" stroke="#4aa5ff" stroke-width="2"/><path d="M1186.6 108.9H1204.4" stroke="#4aa5ff" stroke-width="3.6" stroke-linecap="round"/>
<g fill="#c9c9c9"><circle cx="1232.8" cy="103" r="2.1"/><circle cx="1240" cy="103" r="2.1"/><circle cx="1247.3" cy="103" r="2.1"/></g>
<g transform="translate(1322.900 102.350) rotate(-45)" stroke="#c9c9c9" stroke-width="2.200"><rect x="-11.300" y="-3.200" width="12.800" height="6.400" rx="3.200"/><rect x="-1.500" y="-3.200" width="12.800" height="6.400" rx="3.200"/><path d="M3 -5V-1.700M-3 5V1.700" stroke="#4d4d4d" stroke-width="1.700"/></g><path d="M1326.800 113.900H1334.300A3 3 0 0 0 1334.700 107.900A4.200 4.200 0 0 0 1327 107.100A3.400 3.400 0 0 0 1326.800 113.900Z" fill="#c9c9c9" stroke="#4d4d4d" stroke-width="1.300"/>
<rect x="1359" y="95" width="20" height="15.200" stroke="#c9c9c9" stroke-width="2"/><path d="M1359.5 95.5L1369 104L1378.5 95.5M1359.5 109.700L1367.200 102.400M1378.500 109.700L1370.800 102.400" stroke="#c9c9c9" stroke-width="1.3"/>
<circle cx="1413.2" cy="103" r="10.6" fill="#c9c9c9"/><path d="M1413.2 95.4A3.9 4.3 0 0 1 1415.4 103.3C1415.4 105.2 1420 106 1420.6 109.5A10 10 0 0 1 1405.8 109.5C1406.4 106 1411 105.2 1411 103.3A3.9 4.3 0 0 1 1413.2 95.4Z" fill="#4d4d4d"/><circle cx="1420.8" cy="110" r="5.4" fill="#4d4d4d"/><path d="M1420.8 106.4V113.6M1417.2 110H1424.4" stroke="#c9c9c9" stroke-width="1.7"/>
<circle cx="1253.4" cy="60.8" r="9.5" stroke="#c9c9c9" stroke-width="2"/><text x="1249.300" y="66.300" font-size="14.500" font-weight="bold" fill="#c9c9c9">?</text>
<path d="M1293.300 52H1295.700V53.200C1298.600 54 1299.800 57 1299.800 60.200C1299.800 64 1301.200 66 1303 67.500V68.500H1286V67.500C1287.800 66 1289.200 64 1289.200 60.200C1289.200 57 1290.400 54 1293.300 53.200ZM1291.800 69.500H1297.200A2.700 2.200 0 0 1 1291.800 69.500Z" fill="#8b8b8b"/>
<path d="M6.7 492.8L12.3 498.8L6.7 504.8Z" fill="#d4d4d4"/>
<path d="M1386.8 493.4L1380.3 499L1386.8 504.6Z" fill="#d4d4d4"/>
<path d="M1362.8 139L1366.3 135.2L1369.8 139" stroke="#d0d0d0" stroke-width="1.4"/><path d="M1362.8 859.4L1366.3 863.2L1369.8 859.4" stroke="#9a9a9a" stroke-width="1.4"/>
<path d="M1403 173.5H1431M1403 823.5H1431" stroke="#5e5e5e" stroke-width="1"/>
<circle cx="1415.5" cy="149.2" r="6.9" stroke="#c9c9c9" stroke-width="2"/><path d="M1420.6 154.4L1426.6 159.8" stroke="#c9c9c9" stroke-width="2.6"/><path d="M1414.6 146.2V152.2L1411.4 149.2ZM1416.6 146.2V152.2L1419.8 149.2Z" fill="#c9c9c9"/>
<path d="M1418 204.6H1408V187H1418.5L1423.2 191.7V196.5" stroke="#23c4d3" stroke-width="2"/><path d="M1418.5 187V191.7H1423.2" stroke="#23c4d3" stroke-width="1.5"/><path d="M1410.4 200.42C1413.25 198.425 1414.77 194.53 1414.2 192.63C1413.44 196.05 1415.72 198.52 1418.19 198.9C1415.15 198.33 1412.3 199.09 1410.4 200.42Z" stroke="#23c4d3" stroke-width="1.1" fill="none"/><circle cx="1423.3" cy="203" r="5.9" fill="#23c4d3" stroke="#444444" stroke-width="1"/><path d="M1420 203H1426.2M1423.8 200.4L1426.4 203L1423.8 205.6" stroke="#444444" stroke-width="1.6"/>
<rect x="1407.6" y="233" width="19.4" height="8" stroke="#ff6fc8" stroke-width="2"/><rect x="1407.6" y="245.8" width="8" height="7" stroke="#ff6fc8" stroke-width="2"/><path d="M1420.4 246H1428M1420.4 249.5H1428M1420.4 253H1428" stroke="#ff6fc8" stroke-width="1.2"/>
<path d="M1418 297H1408V279H1418.5L1423.2 283.7V288.5" stroke="#ff6f7d" stroke-width="2"/><path d="M1418.5 279V283.7H1423.2" stroke="#ff6f7d" stroke-width="1.5"/><path d="M1410.4 292.42C1413.25 290.425 1414.77 286.53 1414.2 284.63C1413.44 288.05 1415.72 290.52 1418.19 290.9C1415.15 290.33 1412.3 291.09 1410.4 292.42Z" stroke="#ff6f7d" stroke-width="1.1" fill="none"/><circle cx="1423.3" cy="295.6" r="5.9" fill="#ff6f7d" stroke="#444444" stroke-width="1"/><path d="M1420 295.6H1426.6M1423.3 292.3V298.9" stroke="#444444" stroke-width="1.7"/>
<path d="M1409.5 326.5H1425A1.5 1.5 0 0 1 1426.5 328V338.5A1.5 1.5 0 0 1 1425 340H1418.5L1413.4 345V340H1409.5A1.5 1.5 0 0 1 1408 338.500V328A1.5 1.5 0 0 1 1409.500 326.5Z" stroke="#ffda2f" stroke-width="2"/><path d="M1411.6 330.8H1423M1411.6 335.3H1423" stroke="#ffda2f" stroke-width="1.7"/>
<path d="M1413 383.6H1405.8V370.6H1416.6V374" stroke="#8f8cf8" stroke-width="2"/><path d="M1408.2 379.52C1410.3 378.05 1411.42 375.18 1411 373.78C1410.44 376.3 1412.12 378.12 1413.94 378.4C1411.7 377.98 1409.6 378.54 1408.2 379.52Z" stroke="#8f8cf8" stroke-width="1.1" fill="none"/><path d="M1418 369.6H1425.5L1429.4 373.5V384.6H1418Z" fill="#8f8cf8"/><path d="M1425.5 369.6V373.5H1429.4" stroke="#444444" stroke-width="0.9"/><path d="M1414.6 379.5H1418.6V386.6H1422L1416.6 393.2L1411.200 386.6H1414.6Z" fill="#8f8cf8" stroke="#444444" stroke-width="0.8"/>
<path d="M1408.200 417.600H1414.600L1408.200 424Z" fill="#93ec4e"/><path d="M1410.600 420L1414.800 424.200" stroke="#93ec4e" stroke-width="2.400"/><rect x="1408.900" y="427" width="7.200" height="8" stroke="#93ec4e" stroke-width="1.800" stroke-dasharray="2.400 1.400"/><rect x="1419.600" y="418.200" width="7.200" height="16.800" stroke="#93ec4e" stroke-width="2"/>
<path d="M1410.700 469V464.200H1420.500L1424.600 468.300V469M1424.600 475.800V481.300H1410.700V475.800" stroke="#23c4d3" stroke-width="2"/><path d="M1420.500 464.200V468.300H1424.600" stroke="#23c4d3" stroke-width="1.400"/><path d="M1414.0 476.24C1416.6999999999998 474.35 1418.1399999999999 470.66 1417.6 468.86C1416.8799999999999 472.1 1419.04 474.44 1421.3799999999999 474.8C1418.5 474.26 1415.8 474.98 1414.0 476.24Z" stroke="#23c4d3" stroke-width="1.1" fill="none"/><path d="M1405.400 469.400L1408.400 472.400L1405.400 475.400M1430 469.400L1427 472.400L1430 475.400" stroke="#23c4d3" stroke-width="1.800" stroke-linejoin="miter"/>
<path d="M1412.6 521.6L1423.600 511.6A1.800 1.800 0 0 1 1426.400 514L1416.2 524.6Z" stroke="#ff63b9" stroke-width="2"/><path d="M1406 527.8L1411 521.8L1415.600 526L1417.4 522.6H1428.300V527.8Z" fill="#ff63b9"/>
<path d="M1410.0 556.8H1420.4L1425.2 561.5999999999999V574.3H1410.0Z" stroke="#e664f2" stroke-width="2" fill="none"/><path d="M1420.4 556.8V561.5999999999999H1425.2" stroke="#e664f2" stroke-width="1.8"/>
<rect x="1413.300" y="568.200" width="8.600" height="3.600" stroke="#e664f2" stroke-width="1.5"/>
<path d="M1409.6 602.8H1420.3999999999999L1425.1999999999998 607.5999999999999V620.5H1409.6Z" stroke="#e664f2" stroke-width="2" fill="none"/><path d="M1420.3999999999999 602.8V607.5999999999999H1425.1999999999998" stroke="#e664f2" stroke-width="1.8"/>
<path d="M1412.600 608H1419M1412.600 610.600H1420.600" stroke="#e664f2" stroke-width="1.1"/><path d="M1412.400 613.200H1415.400V616.600L1413.900 618.400L1412.400 616.600Z" fill="#e664f2"/><path d="M1418.400 614.600L1421.400 617.600M1421.400 614.600L1418.400 617.600" stroke="#e664f2" stroke-width="1.2"/>
<path d="M1407.200 666L1409.600 659.400L1420.800 648.200A2.300 2.300 0 0 1 1424.400 651.400L1413.400 663Z" stroke="#b27cf5" stroke-width="2"/><path d="M1407.200 666.200H1414C1416 666.200 1418.400 660 1420 661.500C1421.600 663 1418.500 666.400 1420.600 666.400C1422.400 666.400 1423.400 662.400 1424.800 663.400C1426 664.300 1425 666.200 1428.400 665.800" stroke="#b27cf5" stroke-width="1.7" stroke-linecap="round"/>
<path d="M1416 710.400H1406.700V692.200H1416.600L1421.600 697.200V701.500" stroke="#ffda2f" stroke-width="2"/><path d="M1416.600 692.200V697.200H1421.600" stroke="#ffda2f" stroke-width="1.5"/><path d="M1418.200 703.100H1428.600V711.400H1422.400L1420 714.200V711.400H1418.200Z" fill="#ffda2f"/><path d="M1420.400 705.800H1426.400M1420.400 708.400H1426.400" stroke="#444444" stroke-width="1"/>
<path d="M1407.800 756.400L1416.400 747.400" stroke="#b4b4b4" stroke-width="3.600" stroke-linecap="round"/><path d="M1422.600 739.200A5.200 5.200 0 1 0 1424.800 747.600A5.200 5.200 0 0 0 1426.200 742.200L1423 745.200L1420 744.400L1419.400 741.600Z" fill="#b4b4b4"/><circle cx="1423.300" cy="754.200" r="5.900" fill="#b4b4b4" stroke="#444444" stroke-width="1.200"/><path d="M1420 754.200H1426.600M1423.300 750.900V757.500" stroke="#444444" stroke-width="1.700"/>
<path d="M1414.400 839.800V854" stroke="#c9c9c9" stroke-width="2.400"/><path d="M1418 847H1427M1423.400 843.200L1427.200 847L1423.400 850.800" stroke="#c9c9c9" stroke-width="1.800" stroke-linejoin="miter"/>
</svg>
<div class="menu" id="mainmenu" style="left:111px;top:42px;width:252px;height:429px">
<div class="row" style="left:2px;top:7px;width:248px">
<span class="lbl" style="left:54.70000000000002px;transform:scaleX(0.9273)">Ansi<u>c</u>ht drehen</span>
<svg style="left:210.5px;top:10px" width="5" height="8" viewBox="0 0 5 8"><path d="M0 0L4.6 4L0 8z" fill="#d6d6d6"/></svg>
</div>
<div class="row" style="left:2px;top:35px;width:248px">
<span class="lbl" style="left:54.70000000000002px;transform:scaleX(0.9142)">Seiten<u>n</u>avigation</span>
<svg style="left:210.5px;top:10px" width="5" height="8" viewBox="0 0 5 8"><path d="M0 0L4.6 4L0 8z" fill="#d6d6d6"/></svg>
</div>
<div class="sep" style="left:12px;top:68px;width:226px"></div>
<div class="row hl" style="left:2px;top:74px;width:248px">
<span class="lbl" style="left:54.70000000000002px;transform:scaleX(0.8877)">S<u>e</u>itenanzeige</span>
<svg style="left:210.5px;top:10px" width="5" height="8" viewBox="0 0 5 8"><path d="M0 0L4.6 4L0 8z" fill="#d6d6d6"/></svg>
</div>
<div class="row" style="left:2px;top:102px;width:248px">
<span class="lbl" style="left:54.70000000000002px;transform:scaleX(0.9493)"><u>Z</u>oom</span>
<svg style="left:210.5px;top:10px" width="5" height="8" viewBox="0 0 5 8"><path d="M0 0L4.6 4L0 8z" fill="#d6d6d6"/></svg>
</div>
<div class="sep" style="left:12px;top:135px;width:226px"></div>
<div class="row" style="left:2px;top:141px;width:248px">
<span class="lbl" style="left:54.70000000000002px;transform:scaleX(0.9009)"><u>W</u>erkzeuge</span>
<svg style="left:210.5px;top:10px" width="5" height="8" viewBox="0 0 5 8"><path d="M0 0L4.6 4L0 8z" fill="#d6d6d6"/></svg>
</div>
<div class="sep" style="left:12px;top:174px;width:226px"></div>
<div class="row" style="left:2px;top:180px;width:248px">
<span class="lbl" style="left:54.70000000000002px;transform:scaleX(0.9212)">Ein-/Au<u>s</u>blenden</span>
<svg style="left:210.5px;top:10px" width="5" height="8" viewBox="0 0 5 8"><path d="M0 0L4.6 4L0 8z" fill="#d6d6d6"/></svg>
</div>
<div class="sep" style="left:12px;top:213px;width:226px"></div>
<div class="row" style="left:2px;top:219px;width:248px">
<span class="lbl" style="left:54.70000000000002px;transform:scaleX(0.9022)">Anzeiged<u>e</u>sign</span>
<svg style="left:210.5px;top:10px" width="5" height="8" viewBox="0 0 5 8"><path d="M0 0L4.6 4L0 8z" fill="#d6d6d6"/></svg>
</div>
<div class="row" style="left:2px;top:247px;width:248px">
<span class="lbl" style="left:54.70000000000002px;transform:scaleX(0.9143)"><u>A</u>nzeigegröße</span>
<svg style="left:210.5px;top:10px" width="5" height="8" viewBox="0 0 5 8"><path d="M0 0L4.6 4L0 8z" fill="#d6d6d6"/></svg>
</div>
<div class="sep" style="left:12px;top:280px;width:226px"></div>
<div class="row" style="left:2px;top:286px;width:248px">
<span class="lbl" style="left:54.70000000000002px;transform:scaleX(0.9038)">Lese<u>m</u>odus</span>
<span class="lbl" style="left:186.89999999999998px;transform:scaleX(1.0274)">Ctrl+H</span>
</div>
<div class="row" style="left:2px;top:314px;width:248px">
<span class="lbl" style="left:54.70000000000002px;transform:scaleX(0.941)"><u>V</u>ollbildmodus</span>
<span class="lbl" style="left:190.2px;transform:scaleX(1.009)">Ctrl+L</span>
</div>
<div class="sep" style="left:12px;top:347px;width:226px"></div>
<div class="row" style="left:2px;top:353px;width:248px">
<span class="lbl" style="left:54.70000000000002px;transform:scaleX(0.9222)">Pr<u>o</u>tokollierung...</span>
</div>
<div class="sep" style="left:12px;top:386px;width:226px"></div>
<div class="row" style="left:2px;top:392px;width:248px">
<span class="lbl" style="left:54.70000000000002px;transform:scaleX(0.8859)">S<u>p</u>rachausgabe</span>
<svg style="left:210.5px;top:10px" width="5" height="8" viewBox="0 0 5 8"><path d="M0 0L4.6 4L0 8z" fill="#d6d6d6"/></svg>
</div>
</div>
<div class="menu" id="submenu" style="left:357px;top:114px;width:381px;height:233px">
<div class="row hl" style="left:2px;top:7px;width:375px">
<span class="lbl" style="left:54.69999999999999px;transform:scaleX(0.8861)">Einzel<u>s</u>eitenansicht</span>
</div>
<div class="row" style="left:2px;top:35px;width:375px">
<span class="lbl" style="left:54.69999999999999px;transform:scaleX(0.917)">Bildlauf a<u>k</u>tivieren</span>
</div>
<div class="row" style="left:2px;top:63px;width:375px">
<span class="lbl" style="left:54.69999999999999px;transform:scaleX(0.9066)">Zweiseitenansi<u>c</u>ht</span>
</div>
<div class="row" style="left:2px;top:91px;width:375px">
<span class="lbl" style="left:54.69999999999999px;transform:scaleX(0.908)">Bildlauf in <u>Z</u>weiseitenansicht</span>
</div>
<div class="sep" style="left:12px;top:124px;width:355px"></div>
<div class="row" style="left:2px;top:130px;width:375px">
<span class="lbl" style="left:54.69999999999999px;transform:scaleX(0.8948)"><u>L</u>ücken zwischen Seiten einblenden</span>
</div>
<div class="row" style="left:2px;top:158px;width:375px">
<span class="lbl" style="left:54.69999999999999px;transform:scaleX(0.9143)"><u>D</u>eckblatt in Zweiseitenansicht einblenden</span>
</div>
<div class="sep" style="left:12px;top:191px;width:355px"></div>
<div class="row" style="left:2px;top:197px;width:375px">
<span class="lbl" style="left:54.69999999999999px;transform:scaleX(0.93)"><u>A</u>utomatischer Bildlauf</span>
<span class="lbl" style="left:279.2px;transform:scaleX(0.9889)">Shift+Ctrl+H</span>
</div>
</div>
<svg id="menuicons" style="left:0;top:0" width="1440" height="870" viewBox="0 0 1440 870" fill="none" stroke-linejoin="round">
<path d="M367.9 136.2L370.9 139.3L376.6 132" stroke="#cfcfcf" stroke-width="2.1" stroke-linejoin="miter"/>
<path d="M367.9 259.2L370.9 262.3L376.6 255" stroke="#cfcfcf" stroke-width="2.1" stroke-linejoin="miter"/>
<path d="M390.0 126.0H399.8L405.0 131.2V145.0H390.0Z" stroke="#cfcfcf" stroke-width="2" fill="none"/><path d="M399.8 126.0V131.2H405.0" stroke="#cfcfcf" stroke-width="1.8"/>
<path d="M390.0 153V160.5H405.0V153" stroke="#cfcfcf" stroke-width="2" stroke-linejoin="miter"/><path d="M390.0 175V164.5H400.2L405.0 169.3V175" stroke="#cfcfcf" stroke-width="2" stroke-linejoin="miter"/><path d="M400.2 164.5V169.3H405.0" stroke="#cfcfcf" stroke-width="1.6"/>
<path d="M386.2 184.5H391.59999999999997L395.2 188.1V198.7H386.2Z" stroke="#cfcfcf" stroke-width="2" fill="none"/><path d="M391.59999999999997 184.5V188.1H395.2" stroke="#cfcfcf" stroke-width="1.8"/>
<path d="M398.8 184.5H404.2L407.8 188.1V198.7H398.8Z" stroke="#cfcfcf" stroke-width="2" fill="none"/><path d="M404.2 184.5V188.1H407.8" stroke="#cfcfcf" stroke-width="1.8"/>
<path d="M386.2 208.8V216.3H395.0V208.8" stroke="#cfcfcf" stroke-width="2" stroke-linejoin="miter"/><path d="M386.2 230.8V220.3H391.5L395.0 223.8V230.8" stroke="#cfcfcf" stroke-width="2" stroke-linejoin="miter"/><path d="M391.5 220.3V223.8H395.0" stroke="#cfcfcf" stroke-width="1.6"/>
<path d="M398.4 208.8V216.3H407.2V208.8" stroke="#cfcfcf" stroke-width="2" stroke-linejoin="miter"/><path d="M398.4 230.8V220.3H403.7L407.2 223.8V230.8" stroke="#cfcfcf" stroke-width="2" stroke-linejoin="miter"/><path d="M403.7 220.3V223.8H407.2" stroke="#cfcfcf" stroke-width="1.6"/>
<rect x="142.100" y="333.200" width="17.800" height="18.300" stroke="#cfcfcf" stroke-width="2" fill="#333"/><path d="M142 335.600H160" stroke="#cfcfcf" stroke-width="1.600"/><path d="M144 334.300H148.500" stroke="#555" stroke-width="0.800" stroke-dasharray="1 0.800"/><path d="M153.300 336.900H158.100V341.700Z" fill="#cfcfcf"/><path d="M152.900 342.100L156.200 338.800" stroke="#cfcfcf" stroke-width="2.200"/><path d="M144.400 344.700V349.800H149.500Z" fill="#cfcfcf"/><path d="M149.500 344.700L146.300 347.900" stroke="#cfcfcf" stroke-width="2.200"/>
<rect x="140.900" y="363" width="20.300" height="13.500" fill="#343434" stroke="#cfcfcf" stroke-width="2"/><path d="M160.200 364V375.500H142Z" fill="#585858"/><rect x="146.300" y="378.500" width="9.300" height="2.200" fill="none" stroke="#cfcfcf" stroke-width="1"/>
<rect x="142.100" y="402" width="13.200" height="17.800" stroke="#cfcfcf" stroke-width="2" fill="#4a4a4a"/><path d="M142 411H155.400" stroke="#cfcfcf" stroke-width="1.800"/><path d="M147.600 407.500H150.400M147.600 415.600H151.200" stroke="#cfcfcf" stroke-width="1.100"/><path d="M156.700 398.500C160.200 398.500 162.600 400.600 162.600 403.200C162.600 405.800 160.200 407.900 156.700 407.900C155.900 407.900 155.200 407.800 154.500 407.600L151.800 409.400L152.300 406.300C151.400 405.500 150.800 404.400 150.800 403.200C150.800 400.600 153.200 398.500 156.700 398.500Z" fill="#3d3d3d" stroke="#3d3d3d" stroke-width="2.600"/><path d="M156.700 398.500C160.200 398.500 162.600 400.600 162.600 403.200C162.600 405.800 160.200 407.900 156.700 407.900C155.900 407.900 155.200 407.800 154.500 407.600L151.800 409.400L152.300 406.300C151.400 405.500 150.800 404.400 150.800 403.200C150.800 400.600 153.200 398.500 156.700 398.500Z" fill="#3d3d3d" stroke="#cfcfcf" stroke-width="1.200"/><path d="M154 401.700H159.600M154 404.300H158.400" stroke="#cfcfcf" stroke-width="0.900"/>
<path d="M556.5 131.500V148.300L560.300 144.700L562.900 150.600L565.200 149.600L562.600 143.800H567.800Z" fill="#fff" stroke="#111" stroke-width="1" stroke-linejoin="miter"/>
</svg>
</body></html>
